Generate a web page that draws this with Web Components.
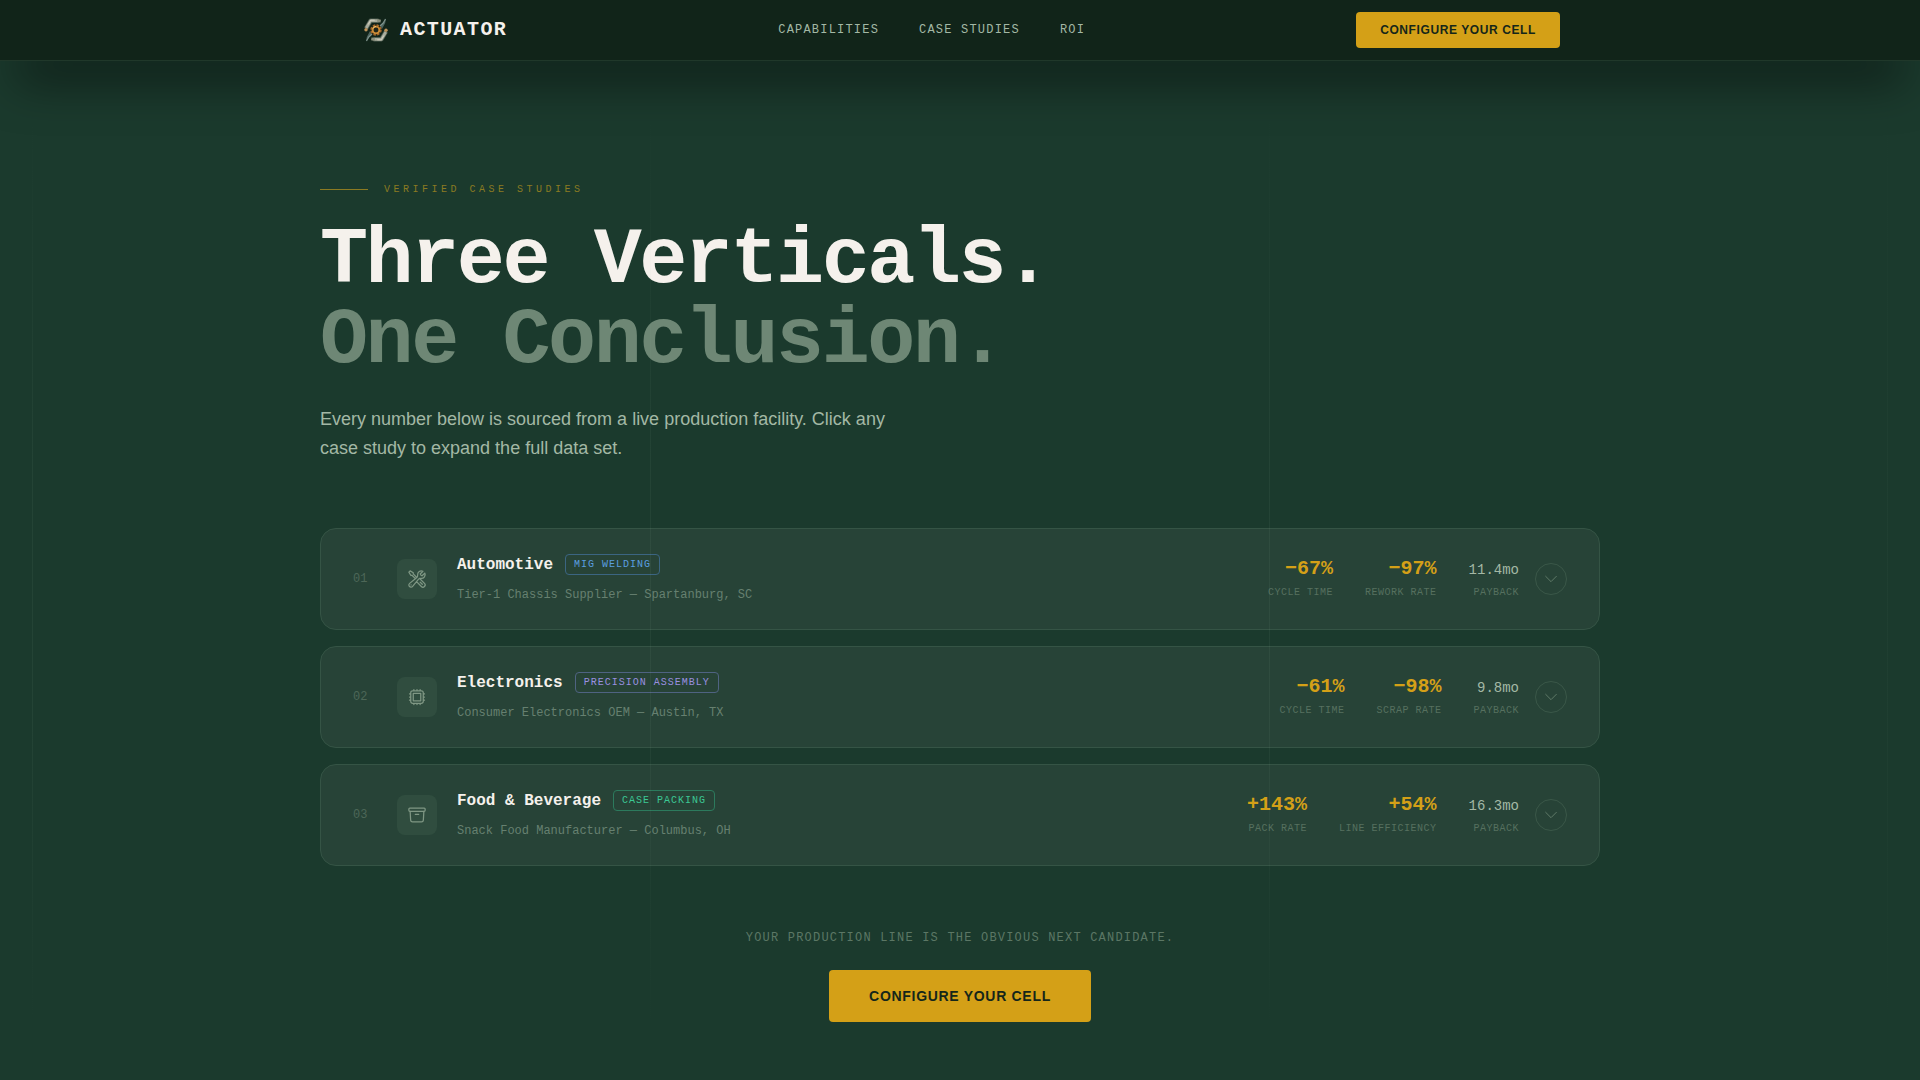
<!DOCTYPE html>
<html lang="en">
<head>
<meta charset="utf-8">
<meta name="viewport" content="width=device-width, initial-scale=1">
<title>Actuator - Case Studies</title>
<style>
    :root {
        --mono: "Liberation Mono", monospace;
        --sans: "Liberation Sans", sans-serif;
        --forest: #1b3a2d;
        --pine: #112419;
        --cream: #f5f1ec;
        --sage: #a3b8a5;
        --moss: #668070;
        --gold: #d4a017;
    }
    body {
        margin: 0;
        background: var(--forest);
        color: var(--cream);
        font-family: var(--sans);
    }
</style>
</head>
<body>
<site-nav></site-nav>
<case-section>
    <span slot="eyebrow">Verified Case Studies</span>
    <span slot="title">Three Verticals.</span>
    <span slot="subtitle">One Conclusion.</span>
    <span slot="intro">Every number below is sourced from a live production facility. Click any case study to expand the full data set.</span>

    <case-card number="01" icon="tools" name="Automotive" tag="MIG Welding" tone="blue" client="Tier-1 Chassis Supplier — Spartanburg, SC">
        <stat-item value="−67%" label="Cycle Time"></stat-item>
        <stat-item value="−97%" label="Rework Rate"></stat-item>
        <stat-item value="11.4mo" label="Payback" quiet></stat-item>
    </case-card>
    <case-card number="02" icon="chip" name="Electronics" tag="Precision Assembly" tone="violet" client="Consumer Electronics OEM — Austin, TX">
        <stat-item value="−61%" label="Cycle Time"></stat-item>
        <stat-item value="−98%" label="Scrap Rate"></stat-item>
        <stat-item value="9.8mo" label="Payback" quiet></stat-item>
    </case-card>
    <case-card number="03" icon="box" name="Food &amp; Beverage" tag="Case Packing" tone="green" client="Snack Food Manufacturer — Columbus, OH">
        <stat-item value="+143%" label="Pack Rate"></stat-item>
        <stat-item value="+54%" label="Line Efficiency"></stat-item>
        <stat-item value="16.3mo" label="Payback" quiet></stat-item>
    </case-card>

    <span slot="closing">Your production line is the obvious next candidate.</span>
</case-section>

<script>
// Gold call-to-action button
class CtaButton extends HTMLElement {
    constructor() {
        super();
        this.attachShadow({ mode: 'open' });
        this.shadowRoot.innerHTML = `
            <style>
                :host { display: inline-block; }
                button {
                    display: block;
                    padding: 0 24px;
                    border: none;
                    border-radius: 4px;
                    background: var(--gold);
                    color: #14261a;
                    font: bold 12px/36px var(--sans);
                    letter-spacing: 0.05em;
                    text-transform: uppercase;
                    white-space: nowrap;
                    cursor: pointer;
                }
                button:hover { background: #e0ae2a; }
                :host([large]) button {
                    padding: 0 40px;
                    font-size: 14px;
                    line-height: 52px;
                }
            </style>
            <button type="button"><slot></slot></button>
        `;
    }
}
customElements.define('cta-button', CtaButton);

// Brand mark: two arms reaching around a gear
class BrandLogo extends HTMLElement {
    constructor() {
        super();
        this.attachShadow({ mode: 'open' });
        this.shadowRoot.innerHTML = `
            <style>
                :host { display: block; }
                a {
                    display: flex;
                    align-items: center;
                    gap: 8px;
                    color: var(--cream);
                    font: bold 20px/24px var(--mono);
                    letter-spacing: 0.07em;
                    text-decoration: none;
                }
                svg { display: block; }
            </style>
            <a href="#">
                <svg width="32" height="32" viewBox="0 0 32 32" fill="none" aria-hidden="true">
                    <g id="arm">
                        <path d="M6 14.500 10.500 6.800h8" stroke="#4f5e53" stroke-width="4.400" stroke-linejoin="round"/>
                        <path d="M6.200 14 10.700 6.600h7" stroke="#a9ac9b" stroke-width="2.800" stroke-linejoin="round"/>
                        <path d="m8.200 10.500 2.500-4.300h4" stroke="#d3d1c2" stroke-width="1"/>
                        <path d="m17.500 5 3.500.800-.500 2.700-3-.300z" fill="#8b8f7c"/>
                        <circle cx="6" cy="15.800" r="1.700" fill="#c0935a"/>
                        <path d="m26 4.500-.800 4.500-3.200 6-3.300-2.600 4.200-3.400z" fill="#4f655f"/>
                        <path d="m25.500 5-2.300 4-3.200 3" stroke="#7d918a" stroke-width="1.200"/>
                    </g>
                    <use href="#arm" transform="rotate(180 16 16)"/>
                    <circle cx="16" cy="16" r="5.800" fill="#1f261b"/>
                    <circle cx="16" cy="16" r="4.800" stroke="#a3672a" stroke-width="1.800" stroke-dasharray="2.400 1.370"/>
                    <circle cx="16" cy="16" r="3.400" stroke="#c98a36" stroke-width="1.900"/>
                    <path d="M13 14.500q1-2 3-2.200" stroke="#eec070" stroke-width="1"/>
                </svg>
                <span>ACTUATOR</span>
            </a>
        `;
    }
}
customElements.define('brand-logo', BrandLogo);

// Top bar
class SiteNav extends HTMLElement {
    constructor() {
        super();
        this.attachShadow({ mode: 'open' });
        this.shadowRoot.innerHTML = `
            <style>
                :host {
                    display: block;
                    position: sticky;
                    top: 0;
                    z-index: 10;
                    background: var(--pine);
                    border-bottom: 1px solid #20382a;
                    box-shadow: 0 34px 48px -16px rgba(0, 0, 0, 0.6);
                }
                .bar {
                    box-sizing: border-box;
                    max-width: 1280px;
                    margin: 0 auto;
                    padding: 12px 40px;
                    display: flex;
                    align-items: center;
                    justify-content: space-between;
                }
                brand-logo { margin: -4px 0; }
                nav {
                    display: flex;
                    gap: 40px;
                }
                nav a {
                    color: var(--sage);
                    font: 12px/16px var(--mono);
                    letter-spacing: 0.1em;
                    text-transform: uppercase;
                    text-decoration: none;
                }
                nav a:hover { color: var(--cream); }
            </style>
            <header class="bar">
                <brand-logo></brand-logo>
                <nav>
                    <a href="#capabilities">Capabilities</a>
                    <a href="#case-studies">Case Studies</a>
                    <a href="#roi">ROI</a>
                </nav>
                <cta-button>Configure Your Cell</cta-button>
            </header>
        `;
    }
}
customElements.define('site-nav', SiteNav);

// Number with a small caption, used in the cards
class StatItem extends HTMLElement {
    constructor() {
        super();
        this.attachShadow({ mode: 'open' });
        const value = this.getAttribute('value');
        const label = this.getAttribute('label');

        this.shadowRoot.innerHTML = `
            <style>
                :host {
                    display: flex;
                    flex-direction: column;
                    align-items: flex-end;
                    gap: 4px;
                    font-family: var(--mono);
                    white-space: nowrap;
                }
                .value {
                    color: var(--gold);
                    font-size: 20px;
                    font-weight: bold;
                    line-height: 24px;
                }
                :host([quiet]) .value {
                    color: var(--sage);
                    font-size: 14px;
                    font-weight: normal;
                    line-height: 22px;
                }
                .label {
                    color: #56705f;
                    font-size: 10px;
                    line-height: 16px;
                    letter-spacing: 0.05em;
                    text-transform: uppercase;
                }
            </style>
            <span class="value">${value}</span>
            <span class="label">${label}</span>
        `;
    }
}
customElements.define('stat-item', StatItem);

const icons = {
    tools: `
        <path d="M11.420 15.170 17.250 21A2.652 2.652 0 0 0 21 17.250l-5.877-5.877M11.420 15.170l2.496-3.030c.317-.384.740-.626 1.208-.766M11.420 15.170l-4.655 5.653a2.548 2.548 0 1 1-3.586-3.586l6.837-5.630m5.108-.233c.550-.164 1.163-.188 1.743-.140a4.500 4.500 0 0 0 4.486-6.336l-3.276 3.277a3.004 3.004 0 0 1-2.250-2.250l3.276-3.276a4.500 4.500 0 0 0-6.336 4.486c.091 1.076-.071 2.264-.904 2.950l-.102.085m-1.745 1.437L5.909 7.500H4.500L2.250 3.750l1.500-1.500L7.500 4.500v1.409l4.260 4.260m-1.745 1.437 1.745-1.437m6.615 8.206L15.750 15.750M4.867 19.125h.008v.008h-.008v-.008Z"/>`,
    chip: `
        <path d="M8.250 3v1.500M4.500 8.250H3m18 0h-1.500M4.500 12H3m18 0h-1.500m-15 3.750H3m18 0h-1.500M8.250 19.500V21M12 3v1.500m0 15V21m3.750-18v1.500m0 15V21m-9-1.500h10.500a2.250 2.250 0 0 0 2.250-2.250V6.750a2.250 2.250 0 0 0-2.250-2.250H6.750A2.250 2.250 0 0 0 4.500 6.750v10.500a2.250 2.250 0 0 0 2.250 2.250Zm.750-12h9v9h-9v-9Z"/>`,
    box: `
        <path d="m20.250 7.500-.625 10.632a2.250 2.250 0 0 1-2.247 2.118H6.622a2.250 2.250 0 0 1-2.247-2.118L3.750 7.500M10 11.250h4M3.375 7.500h17.250c.621 0 1.125-.504 1.125-1.125v-1.500c0-.621-.504-1.125-1.125-1.125H3.375c-.621 0-1.125.504-1.125 1.125v1.500c0 .621.504 1.125 1.125 1.125Z"/>`
};

// One case study row, the whole row toggles it
class CaseCard extends HTMLElement {
    constructor() {
        super();
        this.attachShadow({ mode: 'open' });
        const number = this.getAttribute('number');
        const icon = this.getAttribute('icon');
        const name = this.getAttribute('name');
        const tag = this.getAttribute('tag');
        const client = this.getAttribute('client');

        this.shadowRoot.innerHTML = `
            <style>
                :host {
                    display: block;
                    --tone: #5b9fe0;
                    --tone-line: #3b6582;
                }
                :host([tone="violet"]) {
                    --tone: #9a8fe0;
                    --tone-line: #4f6382;
                }
                :host([tone="green"]) {
                    --tone: #3cc795;
                    --tone-line: #2c7a5d;
                }
                button {
                    box-sizing: border-box;
                    width: 100%;
                    display: flex;
                    align-items: center;
                    gap: 20px;
                    padding: 24px 32px;
                    border: 1px solid #355445;
                    border-radius: 16px;
                    background: #274337;
                    color: var(--cream);
                    font-family: var(--mono);
                    text-align: left;
                    cursor: pointer;
                }
                .number {
                    width: 24px;
                    color: #4d6757;
                    font-size: 12px;
                    line-height: 16px;
                }
                .icon {
                    display: grid;
                    place-items: center;
                    width: 40px;
                    height: 40px;
                    border-radius: 8px;
                    background: #304d3f;
                    color: #7f9784;
                }
                svg {
                    display: block;
                    fill: none;
                    stroke: currentColor;
                    stroke-width: 1.5;
                    stroke-linecap: round;
                    stroke-linejoin: round;
                }
                .info {
                    flex: 1;
                    display: grid;
                    gap: 8px;
                }
                .heading {
                    display: flex;
                    align-items: center;
                    gap: 12px;
                }
                .name {
                    font-size: 16px;
                    font-weight: bold;
                    line-height: 24px;
                }
                .tag {
                    margin-bottom: 1px;
                    padding: 2px 8px;
                    border: 1px solid var(--tone-line);
                    border-radius: 4px;
                    color: var(--tone);
                    font-size: 10px;
                    line-height: 15px;
                    letter-spacing: 0.1em;
                    text-transform: uppercase;
                }
                .client {
                    color: var(--moss);
                    font-size: 12px;
                    line-height: 20px;
                }
                .stats {
                    display: flex;
                    align-items: flex-end;
                    gap: 32px;
                }
                .toggle {
                    box-sizing: border-box;
                    display: grid;
                    place-items: center;
                    width: 32px;
                    height: 32px;
                    margin-left: -4px;
                    border: 1px solid #3a5748;
                    border-radius: 50%;
                    color: #5f7a68;
                }
                button[aria-expanded="true"] .toggle { transform: rotate(180deg); }
            </style>
            <button type="button" aria-expanded="false">
                <span class="number">${number}</span>
                <span class="icon"><svg width="20" height="20" viewBox="0 0 24 24" aria-hidden="true">${icons[icon]}</svg></span>
                <span class="info">
                    <span class="heading">
                        <span class="name">${name}</span>
                        <span class="tag">${tag}</span>
                    </span>
                    <span class="client">${client}</span>
                </span>
                <span class="stats"><slot></slot></span>
                <span class="toggle"><svg width="16" height="16" viewBox="0 0 24 24" aria-hidden="true"><path d="m4 8 8 8 8-8"/></svg></span>
            </button>
        `;

        const button = this.shadowRoot.querySelector('button');
        button.addEventListener('click', () => {
            const open = button.getAttribute('aria-expanded') === 'true';
            button.setAttribute('aria-expanded', String(!open));
        });
    }
}
customElements.define('case-card', CaseCard);

// Faint vertical rules that run over the section
class GridLines extends HTMLElement {
    constructor() {
        super();
        this.attachShadow({ mode: 'open' });
        this.shadowRoot.innerHTML = `
            <style>
                :host {
                    position: absolute;
                    inset: 0;
                    display: flex;
                    justify-content: space-between;
                    padding: 0 32px;
                    pointer-events: none;
                }
                i {
                    width: 1px;
                    background: linear-gradient(transparent 5%, rgba(140, 175, 150, 0.08) 40%, rgba(140, 175, 150, 0.08) 65%, transparent 95%);
                }
                i:first-child, i:last-child { opacity: 0.5; }
            </style>
            <i></i><i></i><i></i><i></i>
        `;
    }
}
customElements.define('grid-lines', GridLines);

// Page section with heading, list of cards and closing call to action
class CaseSection extends HTMLElement {
    constructor() {
        super();
        this.attachShadow({ mode: 'open' });
        this.shadowRoot.innerHTML = `
            <style>
                :host {
                    display: block;
                    position: relative;
                }
                section {
                    max-width: 1280px;
                    margin: 0 auto;
                    padding: 120px 0 56px;
                }
                .eyebrow {
                    display: flex;
                    align-items: center;
                    gap: 16px;
                    margin: 0 0 23px;
                    color: #8b7a22;
                    font: 10px/17px var(--mono);
                    letter-spacing: 0.35em;
                    text-transform: uppercase;
                }
                .eyebrow::before {
                    content: "";
                    width: 48px;
                    height: 1px;
                    background: currentColor;
                }
                h1 {
                    margin: 0 0 24px;
                    font: bold 80px/80px var(--mono);
                    letter-spacing: -0.03em;
                }
                h1 slot { display: block; }
                .muted { color: #6e8775; }
                .intro {
                    max-width: 576px;
                    margin: 0 0 65px;
                    color: var(--sage);
                    font-size: 18px;
                    line-height: 29px;
                }
                .list {
                    display: grid;
                    gap: 16px;
                }
                .closing {
                    display: flex;
                    flex-direction: column;
                    align-items: center;
                    gap: 24px;
                    margin-top: 64px;
                }
                .closing p {
                    margin: 0;
                    color: #5c7765;
                    font: 12px/16px var(--mono);
                    letter-spacing: 0.1em;
                    text-transform: uppercase;
                }
            </style>
            <section id="case-studies">
                <p class="eyebrow"><slot name="eyebrow"></slot></p>
                <h1><slot name="title"></slot><slot name="subtitle" class="muted"></slot></h1>
                <p class="intro"><slot name="intro"></slot></p>
                <div class="list"><slot></slot></div>
                <div class="closing">
                    <p><slot name="closing"></slot></p>
                    <cta-button large>Configure Your Cell</cta-button>
                </div>
            </section>
            <grid-lines></grid-lines>
        `;
    }
}
customElements.define('case-section', CaseSection);
</script>
</body>
</html>
